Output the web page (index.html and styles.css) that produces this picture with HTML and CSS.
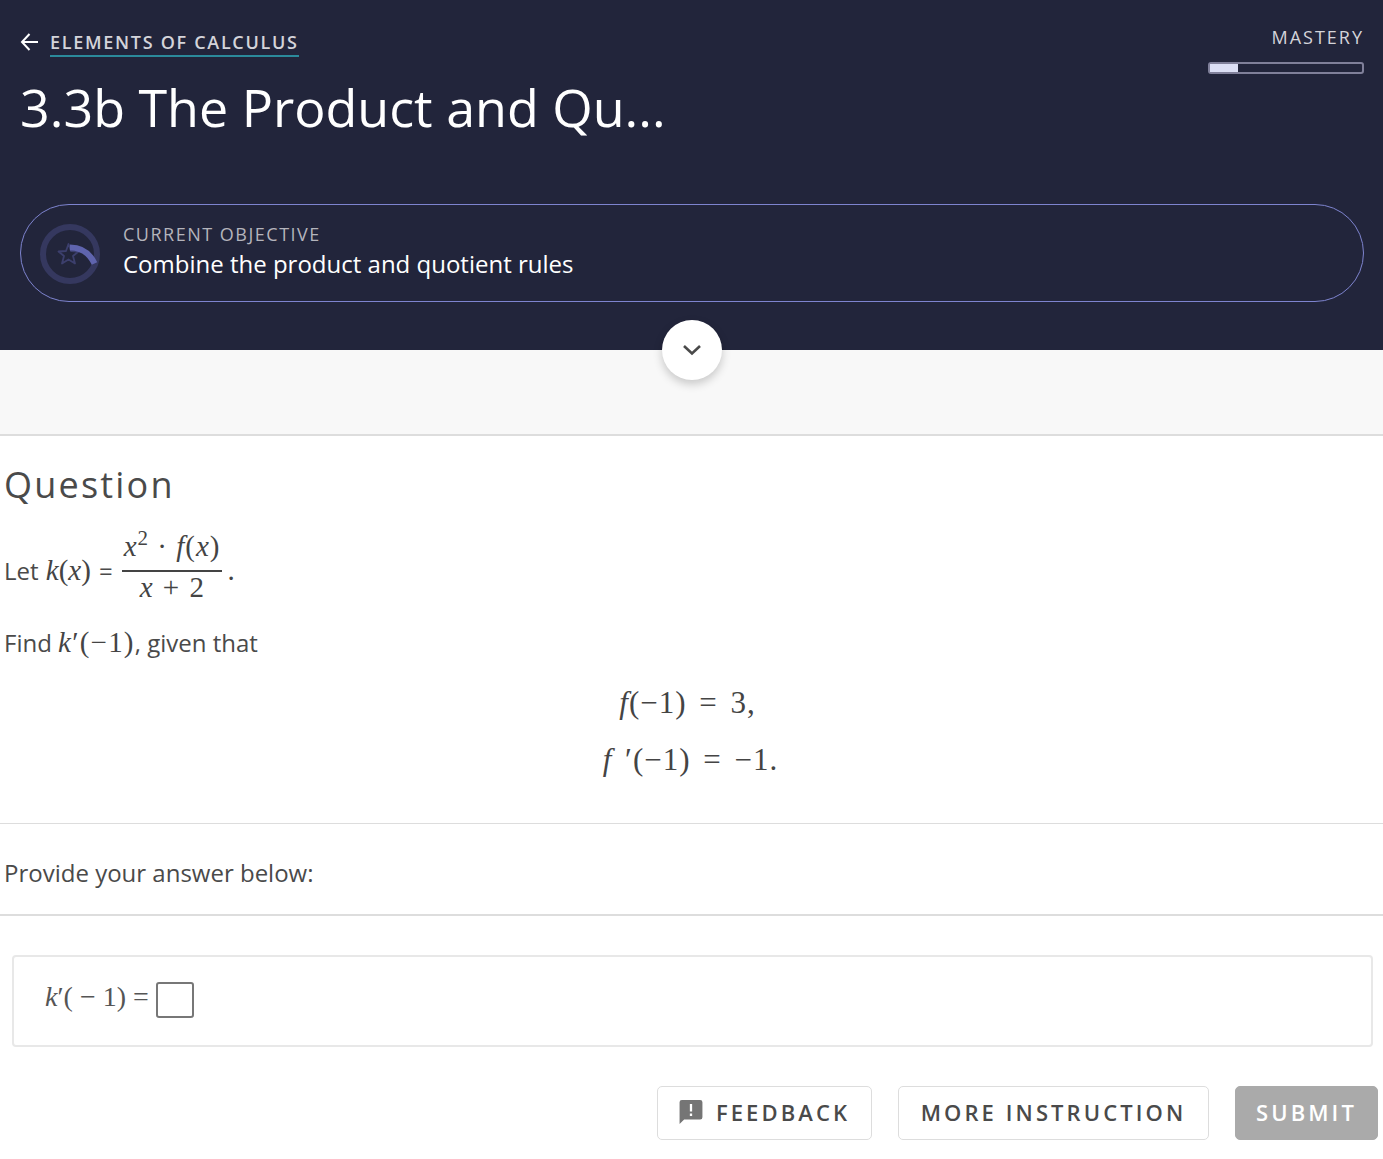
FILE: index.html
```html
<!DOCTYPE html>
<html lang="en">
<head>
<meta charset="utf-8">
<title>3.3b The Product and Quotient Rules</title>
<link rel="stylesheet" href="styles.css">
</head>
<body>
<header class="hero">
  <div class="hero-top">
    <div class="hero-left">
      <div class="crumb">
        <svg class="back-icon" width="18" height="18" viewBox="0 0 18 18" fill="none" stroke="#fff" stroke-width="2"><path d="M18 9H2"/><path d="M9.500 1 2 9l7.500 8"/></svg>
        <a class="crumb-link">ELEMENTS OF CALCULUS</a>
      </div>
      <h1 class="title">3.3b The Product and Qu...</h1>
    </div>
    <div class="mastery">
      <div class="mastery-label">MASTERY</div>
      <div class="mastery-bar"><div class="mastery-fill"></div></div>
    </div>
  </div>
  <div class="objective">
    <svg class="ring" width="60" height="60" viewBox="0 0 60 60" fill="none">
      <circle cx="30" cy="30" r="27" stroke="#35385f" stroke-width="6"/>
      <path d="M28.500 20 31 27 38.500 27.500 33 32 35 39.500 28.500 35.500 22 39.500 24 32 18.500 27.500 26 27Z" stroke="#3c3f6d" stroke-width="1.800" stroke-linejoin="round"/>
      <path d="M30 23.500C42 23.500 50 30 54.500 39.500" stroke="#5f64ae" stroke-width="6"/>
    </svg>
    <div class="objective-text">
      <div class="objective-label">CURRENT OBJECTIVE</div>
      <div class="objective-name">Combine the product and quotient rules</div>
    </div>
  </div>
  <button class="toggle" aria-label="Expand">
    <svg width="20" height="12" viewBox="0 0 20 12" fill="none" stroke="#4a4a4a" stroke-width="2.600"><path d="M2 2l8 7.500L18 2"/></svg>
  </button>
</header>
<div class="band"></div>
<main>
  <section class="question">
    <h2 class="question-title">Question</h2>
    <div class="line-let">Let <span class="math"><i>k</i>(<i>x</i>)</span><span class="eq-sign">=</span>
      <span class="frac"><span class="num"><span class="math"><i>x</i><sup>2</sup> · <i>f</i>(<i>x</i>)</span></span><span class="den"><span class="math"><i>x</i> + 2</span></span></span><span class="math frac-dot">.</span>
    </div>
    <p class="line-find">Find <span class="math"><i>k</i>′(−1)</span>, given that</p>
    <div class="display">
      <div class="eq eq-a math"><i>f</i>(−1) = 3,</div>
      <div class="eq math"><i>f</i> ′(−1) = −1.</div>
    </div>
  </section>
  <section class="prompt">Provide your answer below:</section>
  <section class="answer">
    <div class="answer-box">
      <span class="answer-math math"><i>k</i>′( − 1) =</span><span class="blank"></span>
    </div>
  </section>
  <div class="actions">
    <button class="btn btn-feedback">
      <svg width="24" height="24" viewBox="2.500 2.500 20 21" fill="#757575"><path d="M2.500 4.500A2 2 0 0 1 4.500 2.500h16a2 2 0 0 1 2 2v13a2 2 0 0 1-2 2H6.500l-4 4Z"/><path d="M11.500 6h2v6.500h-2zM11.500 14.300h2v2.200h-2z" fill="#fff"/></svg>
      FEEDBACK
    </button>
    <button class="btn btn-more">MORE INSTRUCTION</button>
    <button class="btn btn-submit">SUBMIT</button>
  </div>
</main>
</body>
</html>
```
FILE: styles.css
```css
* { box-sizing: border-box; }
html, body { margin: 0; padding: 0; }
body { font-family: "Open Sans", sans-serif; color: #4a4a4a; background: #fff; }
.hero { position: relative; height: 350px; background: #22253b; padding: 0 19px 0 20px; display: flex; flex-direction: column; }
.hero-top { display: flex; justify-content: space-between; height: 204px; }
.crumb { display: flex; align-items: center; padding-top: 30px; }
.back-icon { margin-right: 12px; margin-top: -4px; }
.crumb-link { font-size: 18px; line-height: 24px; font-weight: 600; letter-spacing: 1.700px; color: #d4d4da; border-bottom: 2px solid #2b8a9b; padding-bottom: 1px; white-space: nowrap; }
.title { margin: 14px 0 0; font-size: 52px; line-height: 71px; font-weight: 400; color: #fff; white-space: nowrap; }
.mastery { width: 156px; padding-top: 26px; }
.mastery-label { font-size: 18px; line-height: 23px; letter-spacing: 2px; color: #d4d4da; text-align: right; white-space: nowrap; }
.mastery-bar { margin-top: 13px; height: 12px; border: 2px solid #80809a; border-radius: 3px; }
.mastery-fill { width: 28px; height: 8px; background: #dcdff5; }
.objective { height: 98px; border: 1px solid #7e84cf; border-radius: 49px; display: flex; align-items: center; padding-left: 19px; }
.ring { flex: none; margin-right: 23px; margin-top: 2px; }
.objective-label { font-size: 18px; line-height: 24px; letter-spacing: 1.500px; color: #b4b4bc; }
.objective-name { font-size: 24px; line-height: 36px; color: #fff; }
.objective-text { margin-top: -3px; }
.toggle { position: absolute; left: 662px; top: 320px; width: 60px; height: 60px; border: 0; border-radius: 50%; background: #fff; box-shadow: 0 4px 10px rgba(0,0,0,.2); display: flex; align-items: center; justify-content: center; padding: 0; }
.band { height: 86px; background: #f8f8f8; border-bottom: 2px solid #ddd; margin-bottom: -1px; }
.math { font-family: "Liberation Serif", serif; font-size: 29px; color: #444; }
.math sup { font-size: 21px; line-height: 0; vertical-align: 11px; }
.question { padding: 0 4px; height: 389px; border-bottom: 1px solid #ddd; }
.question-title { margin: 0; padding-top: 25px; font-size: 36px; line-height: 50px; font-weight: 400; letter-spacing: 2.200px; color: #4a4a4a; }
.line-let { display: flex; align-items: center; font-size: 24px; height: 88px; margin-top: 16px; white-space: pre; }
.line-let > .math { margin-left: 1px; }
.eq-sign { margin-left: 8px; }
.frac { display: inline-flex; flex-direction: column; align-items: stretch; text-align: center; margin: 0 5px 0 9px; }
.frac .math { margin: 0; }
.num { border-bottom: 2px solid #444; height: 46px; line-height: 40px; padding: 0 2px; letter-spacing: 1px; }
.num .math { letter-spacing: 1px; }
.den { line-height: 30px; height: 42px; }
.den .math { letter-spacing: 0.500px; word-spacing: 2px; }
.frac-dot.math { margin-left: 0; }
.line-find { margin: 8px 0 0; font-size: 24px; height: 40px; line-height: 40px; }
.line-find .math { letter-spacing: 1.200px; }
.display { margin-top: 12px; }
.eq { text-align: center; line-height: 57px; height: 57px; padding-right: 2px; font-size: 31px; letter-spacing: 1px; word-spacing: 4px; }
.eq-a { padding-right: 8px; }
.prompt { height: 92px; border-bottom: 2px solid #ddd; padding: 0 4px; font-size: 24px; line-height: 98px; }
.answer { padding: 39px 10px 0 12px; }
.answer-box { height: 92px; border: 2px solid #e8e8e8; border-radius: 4px; display: flex; align-items: center; padding-left: 31px; }
.answer-math { font-size: 28px; color: #555; margin-right: 7px; margin-bottom: 8px; }
.blank { width: 38px; height: 36px; border: 2px solid #777; border-radius: 3px; margin-top: -2px; }
.actions { display: flex; justify-content: flex-end; gap: 26px; padding: 39px 5px 0 0; }
.btn { height: 54px; font-family: "Open Sans", sans-serif; font-size: 22px; font-weight: 600; letter-spacing: 3.100px; border-radius: 5px; background: #fff; border: 1px solid #ddd; color: #4a4a4a; display: flex; align-items: center; justify-content: center; padding: 0 0 2px; white-space: nowrap; }
.btn-feedback { width: 215px; gap: 13px; }
.btn-more { width: 311px; }
.btn-submit { width: 143px; background: #aaa; border-color: #aaa; color: #fff; }
```
